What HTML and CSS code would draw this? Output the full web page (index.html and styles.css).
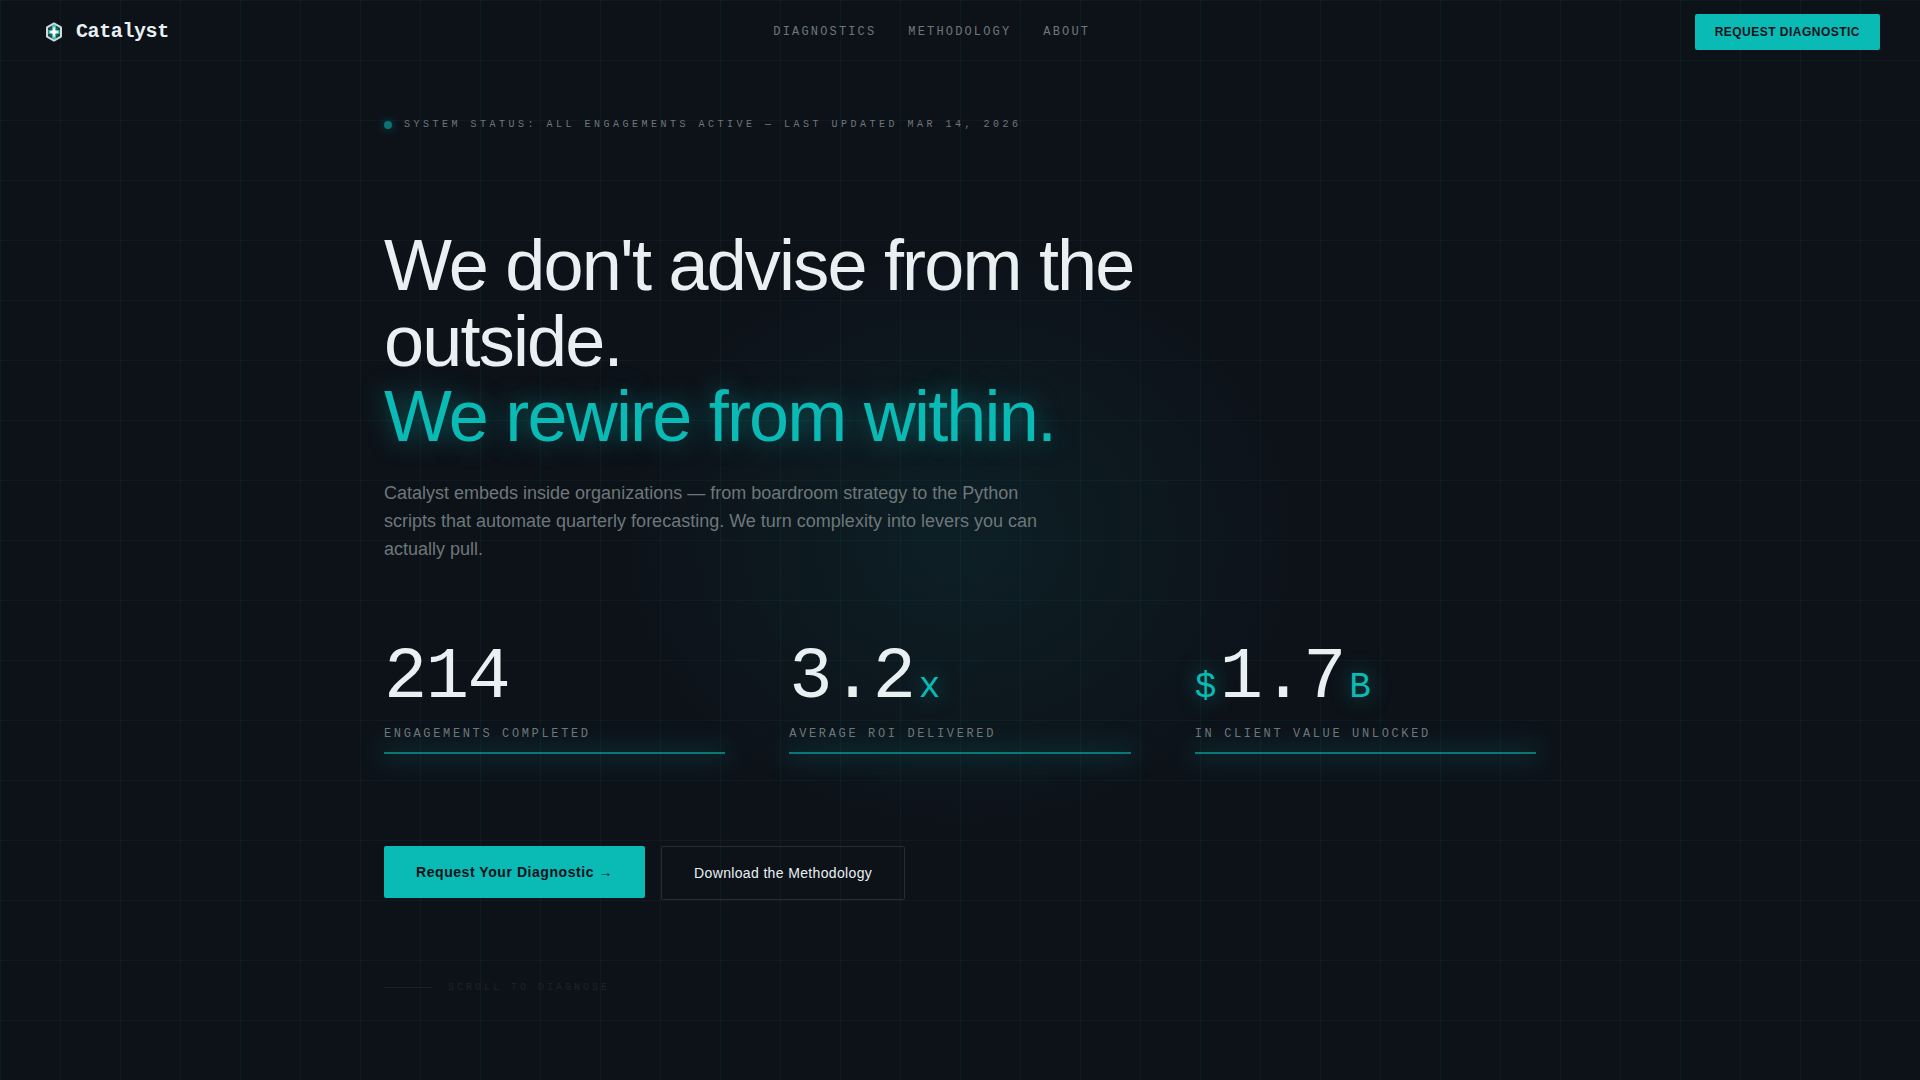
FILE: index.html
```html
<!doctype html>
<html lang="en">
<head>
    <meta charset="UTF-8" />
    <meta name="viewport" content="width=device-width, initial-scale=1.0" />
    <title>Catalyst</title>
    <link rel="stylesheet" href="styles.css">
</head>
<body>
    <nav class="nav">
        <a href="#" class="nav-logo">
            <svg class="logo-mark" viewBox="0 0 28 28" aria-hidden="true">
                <polygon points="14,5.4 21,9.4 21,18.6 14,22.6 7,18.6 7,9.4" fill="#17474c" stroke="#d5d8d6" stroke-width="2" stroke-linejoin="round" />
                <path d="M14 7v14M8.5 14h11" stroke="#2fc4c4" stroke-width="4" />
                <path d="M10.5 10l7 8M17.5 10l-7 8" stroke="#8a6a45" stroke-width="1" />
                <path d="M14 8l1.5 4.5L19 14l-3.5 1.5L14 20l-1.5-4.5L9 14l3.5-1.5z" fill="#ffffff" />
            </svg>
            <span class="logo-text">Catalyst</span>
        </a>
        <div class="nav-links">
            <a href="#diagnostics">Diagnostics</a>
            <a href="#methodology">Methodology</a>
            <a href="#about">About</a>
        </div>
        <a href="#request" class="nav-cta">Request Diagnostic</a>
    </nav>

    <main class="hero">
        <div class="hero-inner">
            <div class="status">
                <span class="status-dot"></span>
                <span>System Status: All Engagements Active — Last Updated Mar 14, 2026</span>
            </div>

            <h1 class="headline">We don't advise from the outside.<br><span class="headline-accent">We rewire from within.</span></h1>

            <p class="subhead">Catalyst embeds inside organizations — from boardroom strategy to the Python scripts that automate quarterly forecasting. We turn complexity into levers you can actually pull.</p>

            <div class="metrics">
                <div class="metric">
                    <div class="metric-value">214</div>
                    <div class="metric-label">Engagements Completed</div>
                    <div class="metric-bar"></div>
                </div>
                <div class="metric">
                    <div class="metric-value">3.2<span class="unit suffix">x</span></div>
                    <div class="metric-label">Average ROI Delivered</div>
                    <div class="metric-bar"></div>
                </div>
                <div class="metric">
                    <div class="metric-value"><span class="unit prefix">$</span>1.7<span class="unit suffix">B</span></div>
                    <div class="metric-label">In Client Value Unlocked</div>
                    <div class="metric-bar"></div>
                </div>
            </div>

            <div class="actions">
                <button type="button" class="btn btn-primary">Request Your Diagnostic →</button>
                <button type="button" class="btn btn-ghost">Download the Methodology</button>
            </div>

            <div class="scroll-hint">
                <span class="scroll-line"></span>
                <span>Scroll to Diagnose</span>
            </div>
        </div>
    </main>
</body>
</html>
```

FILE: styles.css
```css
:root {
    --bg: #0d1219;
    --teal: #0abab5;
    --text: #e8f0f2;
    --muted: #6e777a;
    --sans: "Liberation Sans", Arial, sans-serif;
    --mono: "Liberation Mono", "Courier New", monospace;
}

* {
    box-sizing: border-box;
    margin: 0;
    padding: 0;
}

body {
    min-height: 100vh;
    background-color: var(--bg);
    background-image:
        linear-gradient(rgba(10, 186, 181, 0.06) 1px, transparent 1px),
        linear-gradient(90deg, rgba(10, 186, 181, 0.06) 1px, transparent 1px),
        radial-gradient(ellipse 340px 290px at 50% 50%, rgba(10, 186, 181, 0.08) 0, transparent 100%);
    background-size: 60px 60px, 60px 60px, 100% 100%;
    color: var(--text);
    font-family: var(--sans);
}

a {
    color: inherit;
    text-decoration: none;
}

.nav {
    display: grid;
    grid-template-columns: auto 1fr auto;
    align-items: center;
    padding: 14px 40px;
}

.nav-logo {
    display: flex;
    align-items: center;
    gap: 8px;
}

.logo-mark {
    width: 28px;
    height: 28px;
}

.logo-text {
    font-family: var(--mono);
    font-size: 20px;
    font-weight: 700;
    line-height: 20px;
    letter-spacing: -0.02em;
}

.nav-links {
    display: flex;
    justify-content: center;
    gap: 32px;
    font-family: var(--mono);
    font-size: 12px;
    letter-spacing: 0.18em;
    text-transform: uppercase;
    color: var(--muted);
}

.nav-cta {
    padding: 0 20px;
    border-radius: 2px;
    background: var(--teal);
    color: var(--bg);
    font-size: 12px;
    font-weight: 700;
    line-height: 36px;
    letter-spacing: 0.04em;
    text-transform: uppercase;
}

.hero {
    padding: 52px 40px;
}

.hero-inner {
    max-width: 1152px;
    margin: 0 auto;
}

.status {
    display: flex;
    align-items: center;
    gap: 12px;
    margin-bottom: 94px;
    font-family: var(--mono);
    font-size: 10px;
    line-height: 18px;
    letter-spacing: 0.35em;
    text-transform: uppercase;
    color: var(--muted);
}

.status-dot {
    width: 8px;
    height: 8px;
    border-radius: 50%;
    background: #0b7472;
    box-shadow: 0 0 8px rgba(10, 186, 181, 0.4);
}

.headline {
    max-width: 900px;
    margin-bottom: 24px;
    font-size: 72px;
    font-weight: 400;
    line-height: 1.05;
    letter-spacing: -0.025em;
}

.headline-accent {
    color: var(--teal);
    text-shadow: 0 0 24px rgba(10, 186, 181, 0.5);
}

.subhead {
    max-width: 680px;
    margin-bottom: 79px;
    font-size: 18px;
    line-height: 28px;
    color: var(--muted);
}

.metrics {
    display: grid;
    grid-template-columns: repeat(3, 1fr);
    gap: 64px;
    margin-bottom: 92px;
}

.metric-value {
    margin-bottom: 12px;
    font-family: var(--mono);
    font-size: 72px;
    line-height: 72px;
    letter-spacing: -0.02em;
}

.unit {
    color: var(--teal);
    font-size: 36px;
    line-height: 36px;
    text-shadow: 0 0 20px rgba(10, 186, 181, 0.5);
}

.prefix {
    margin-right: 5px;
}

.suffix {
    margin-left: 4px;
}

.metric-label {
    margin-bottom: 10px;
    font-family: var(--mono);
    font-size: 12px;
    line-height: 16px;
    letter-spacing: 0.22em;
    text-transform: uppercase;
    color: var(--muted);
}

.metric-bar {
    height: 2px;
    background: var(--teal);
    box-shadow: 0 0 24px 4px rgba(10, 186, 181, 0.4);
    opacity: 0.6;
}

.actions {
    display: flex;
    align-items: flex-start;
    gap: 16px;
    margin-bottom: 80px;
}

.btn {
    padding: 18px 32px;
    border: none;
    border-radius: 2px;
    font-family: var(--sans);
    font-size: 14px;
    line-height: 16px;
    cursor: pointer;
}

.btn-primary {
    background: var(--teal);
    color: var(--bg);
    font-weight: 700;
    letter-spacing: 0.04em;
}

.btn-ghost {
    border: 1px solid #272c33;
    background: transparent;
    color: var(--text);
    letter-spacing: 0.025em;
}

.scroll-hint {
    display: flex;
    align-items: center;
    gap: 16px;
    font-family: var(--mono);
    font-size: 10px;
    line-height: 16px;
    letter-spacing: 0.3em;
    text-transform: uppercase;
    color: #1d2329;
}

.scroll-line {
    width: 48px;
    height: 1px;
    background: #1a2329;
}
```
